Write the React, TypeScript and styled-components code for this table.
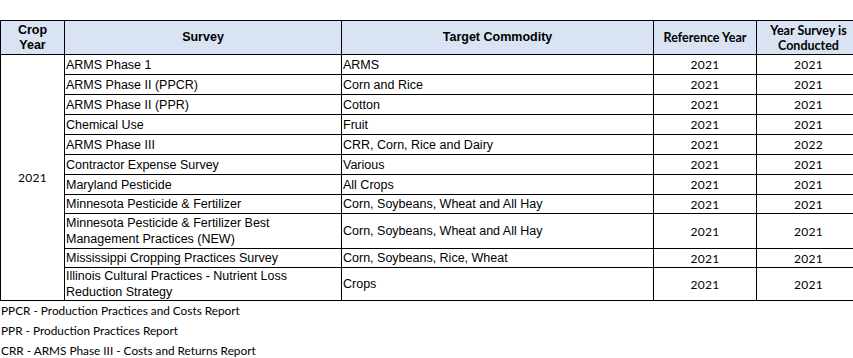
import React, {FC} from 'react';
import styled, {createGlobalStyle} from 'styled-components';

const Global=createGlobalStyle`
body{
margin:0;
overflow:hidden;
background:#fff;
}
`;

const Wrapper=styled.div`
padding-top:20px;
width:853px;
overflow:hidden;
`;

const Table=styled.table`
border-collapse:collapse;
table-layout:fixed;
width:860px;
color:#000;
`;

const HeadCell=styled.th<{$calibri?:boolean}>`
background:#dae3f3;
border:1px solid #000;
height:33px;
padding:0 2px;
text-align:center;
vertical-align:middle;
font-family:${p=>p.$calibri?'Lato, "Open Sans", sans-serif':'"Liberation Sans", Arial, sans-serif'};
font-size:${p=>p.$calibri?'12.5px':'12.5px'};
font-weight:bold;
line-height:15px;
`;

const Row=styled.tr<{$tall?:number}>`
height:${p=>p.$tall||20}px;
`;

const TextCell=styled.td`
border:1px solid #000;
padding:0 1px 0 1px;
font-family:"Liberation Sans", Arial, sans-serif;
font-size:12.5px;
line-height:16px;
vertical-align:middle;
text-align:left;
`;

const YearCell=styled.td`
border:1px solid #000;
padding:0;
font-family:Lato, "Open Sans", sans-serif;
font-size:12px;
letter-spacing:0.3px;
text-align:center;
vertical-align:middle;
`;

const Notes=styled.div`
display:flex;
flex-direction:column;
padding-left:1px;
`;

const Note=styled.div`
font-family:Lato, "Open Sans", sans-serif;
font-size:11.8px;
line-height:20px;
color:#000;
`;

type Survey={name:string;commodity:string;ref:string;conducted:string;tall?:number};

const surveys:Survey[]=[
    {name:'ARMS Phase 1',commodity:'ARMS',ref:'2021',conducted:'2021'},
    {name:'ARMS Phase II (PPCR)',commodity:'Corn and Rice',ref:'2021',conducted:'2021'},
    {name:'ARMS Phase II (PPR)',commodity:'Cotton',ref:'2021',conducted:'2021'},
    {name:'Chemical Use',commodity:'Fruit',ref:'2021',conducted:'2021'},
    {name:'ARMS Phase III',commodity:'CRR, Corn, Rice and Dairy',ref:'2021',conducted:'2022'},
    {name:'Contractor Expense Survey',commodity:'Various',ref:'2021',conducted:'2021'},
    {name:'Maryland Pesticide',commodity:'All Crops',ref:'2021',conducted:'2021'},
    {name:'Minnesota Pesticide & Fertilizer',commodity:'Corn, Soybeans, Wheat and All Hay',ref:'2021',conducted:'2021',tall:19},
    {name:'Minnesota Pesticide & Fertilizer Best Management Practices (NEW)',commodity:'Corn, Soybeans, Wheat and All Hay',ref:'2021',conducted:'2021',tall:35},
    {name:'Mississippi Cropping Practices Survey',commodity:'Corn, Soybeans, Rice, Wheat',ref:'2021',conducted:'2021',tall:19},
    {name:'Illinois Cultural Practices - Nutrient Loss Reduction Strategy',commodity:'Crops',ref:'2021',conducted:'2021',tall:33},
];

const App:FC=()=>{
    return(
        <Wrapper>
            <Global />
            <Table>
                <colgroup>
                    <col style={{width:64}} />
                    <col style={{width:277}} />
                    <col style={{width:312}} />
                    <col style={{width:103}} />
                    <col style={{width:104}} />
                </colgroup>
                <thead>
                    <tr>
                        <HeadCell>Crop<br />Year</HeadCell>
                        <HeadCell>Survey</HeadCell>
                        <HeadCell>Target Commodity</HeadCell>
                        <HeadCell $calibri>Reference Year</HeadCell>
                        <HeadCell $calibri>Year Survey is<br />Conducted</HeadCell>
                    </tr>
                </thead>
                <tbody>
                    {surveys.map((s,i)=>(
                        <Row key={s.name} $tall={s.tall}>
                            {i===0 && <YearCell rowSpan={surveys.length}>2021</YearCell>}
                            <TextCell>{s.name}</TextCell>
                            <TextCell>{s.commodity}</TextCell>
                            <YearCell>{s.ref}</YearCell>
                            <YearCell>{s.conducted}</YearCell>
                        </Row>
                    ))}
                </tbody>
            </Table>
            <Notes>
                <Note>PPCR - Production Practices and Costs Report</Note>
                <Note>PPR - Production Practices Report</Note>
                <Note>CRR - ARMS Phase III - Costs and Returns Report</Note>
            </Notes>
        </Wrapper>
    );
}

export default App;
